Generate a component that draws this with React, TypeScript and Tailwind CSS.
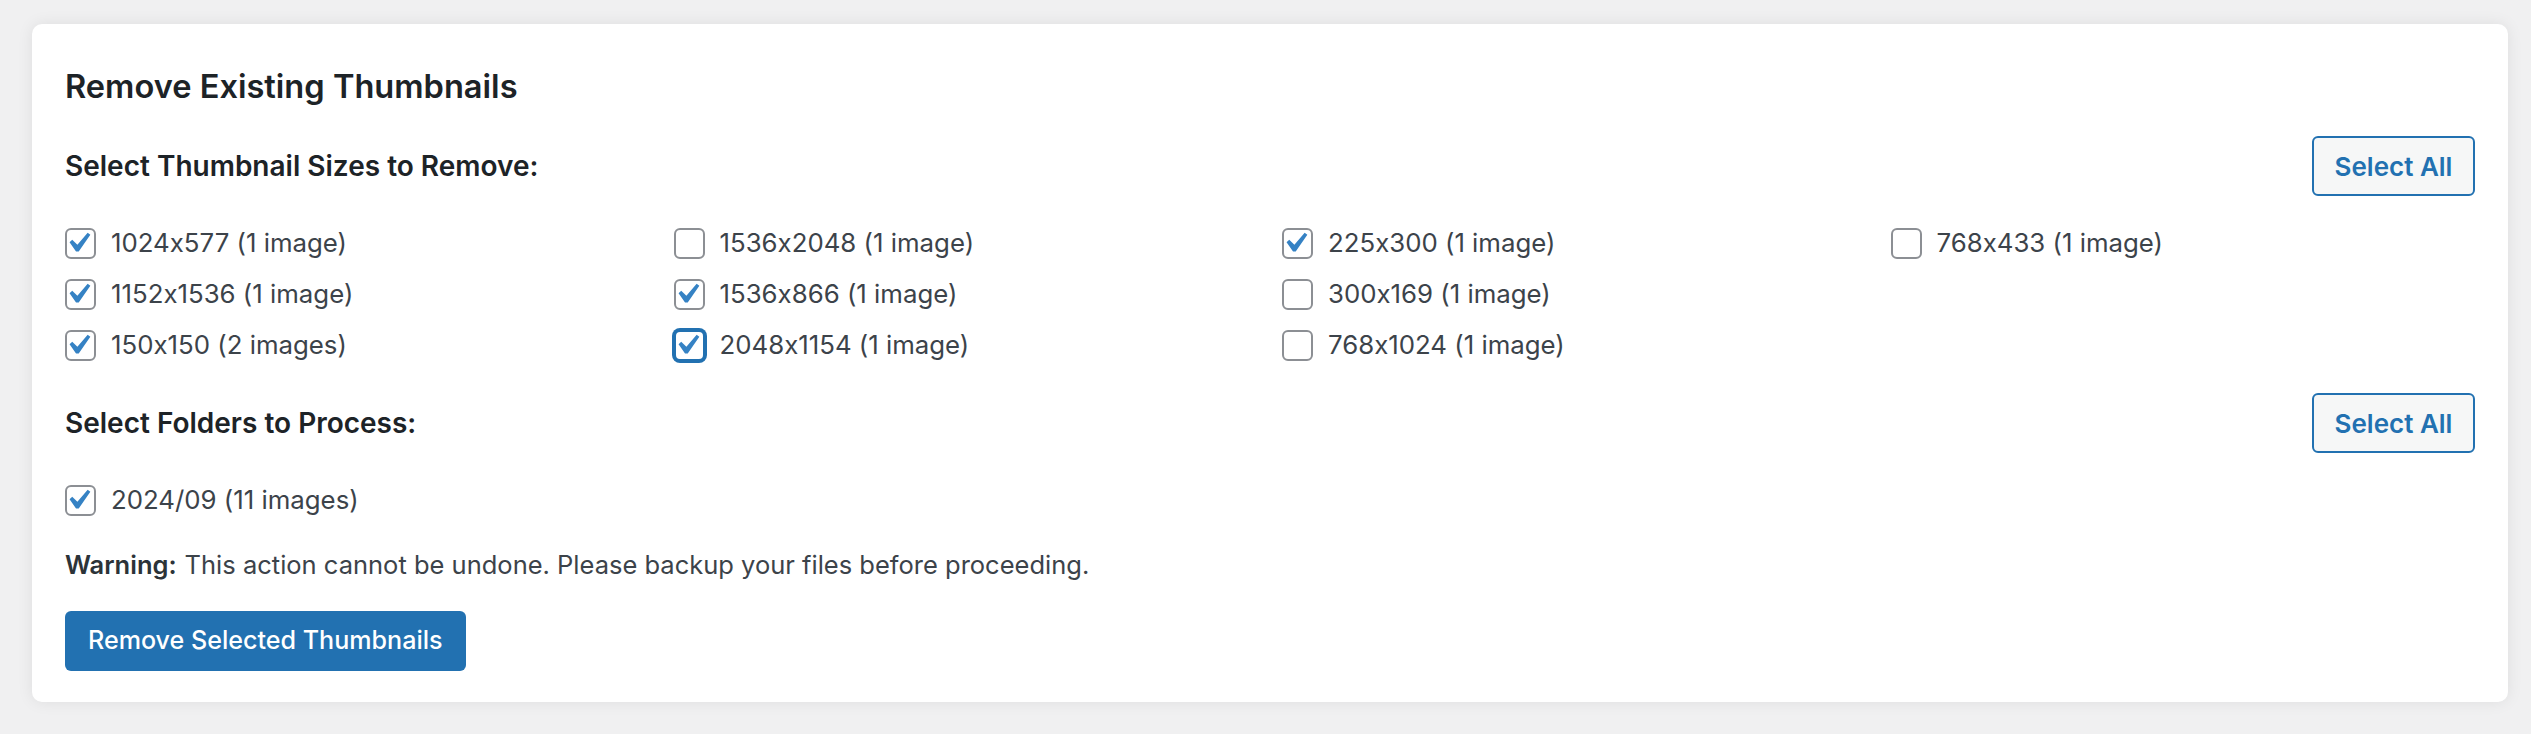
import { useState } from 'react';

const SIZES = [
  { label: '1024x577 (1 image)', checked: true },
  { label: '1152x1536 (1 image)', checked: true },
  { label: '150x150 (2 images)', checked: true },
  { label: '1536x2048 (1 image)', checked: false },
  { label: '1536x866 (1 image)', checked: true },
  { label: '2048x1154 (1 image)', checked: true, focused: true },
  { label: '225x300 (1 image)', checked: true },
  { label: '300x169 (1 image)', checked: false },
  { label: '768x1024 (1 image)', checked: false },
  { label: '768x433 (1 image)', checked: false },
];

function Checkbox({ checked, focused }: { checked: boolean; focused?: boolean }) {
  return (
    <span
      className={`relative w-[31px] h-[31px] shrink-0 rounded-[6px] border-2 bg-white ${
        focused ? 'border-[#2271b1] shadow-[0_0_0_2px_#2271b1]' : 'border-[#8c8f94]'
      }`}
    >
      {checked && (
        <svg
          viewBox="0 0 20 20"
          className="absolute left-[-9px] top-[-7px] w-[40px] h-[40px]"
          fill="#3582c4"
        >
          <path d="M14.83 4.89l1.34.94-5.81 8.38H9.02L5.78 9.67l1.34-1.25 2.57 2.4z" />
        </svg>
      )}
    </span>
  );
}

function Option({ label, checked, focused }: { label: string; checked: boolean; focused?: boolean }) {
  const [on, setOn] = useState(checked);
  return (
    <label className="h-[51px] flex items-center gap-[15px] cursor-pointer" onClick={() => setOn(!on)}>
      <Checkbox checked={on} focused={focused} />
      <span className="text-[25.8px] text-[#3c434a]">{label}</span>
    </label>
  );
}

function SectionHeader({ title }: { title: string }) {
  return (
    <div className="flex items-center justify-between h-[60px]">
      <h3 className="text-[28px] font-semibold text-[#1d2327]">{title}</h3>
      <button className="h-[60px] w-[163px] rounded-[6px] border-2 border-[#2271b1] bg-[#f6f7f7] text-[26px] font-semibold text-[#2271b1]">
        Select All
      </button>
    </div>
  );
}

export default function App() {
  return (
    <div
      className="min-h-screen bg-[#f0f0f1] pt-[24px] px-[32px] pr-[23px] [font-feature-settings:'calt'_0]"
      style={{ fontFamily: 'Inter, "Noto Sans", sans-serif' }}
    >
      <div className="bg-white rounded-[10px] shadow-[0_0_16px_rgba(0,0,0,0.08)] px-[33px] pt-[40px] pb-[31px]">
        <h2 className="h-[44px] flex items-center text-[32.6px] font-semibold text-[#1d2327]">
          Remove Existing Thumbnails
        </h2>

        <div className="mt-[28px]">
          <SectionHeader title="Select Thumbnail Sizes to Remove:" />
        </div>

        <div className="mt-[22px] grid grid-cols-4 grid-rows-3 grid-flow-col gap-x-6">
          {SIZES.map((s) => (
            <Option key={s.label} label={s.label} checked={s.checked} focused={s.focused} />
          ))}
        </div>

        <div className="mt-[22px]">
          <SectionHeader title="Select Folders to Process:" />
        </div>

        <div className="mt-[22px]">
          <Option label="2024/09 (11 images)" checked />
        </div>

        <p className="mt-[21px] h-[36px] flex items-center text-[25.5px] text-[#3c434a]">
          <strong className="font-semibold text-[#2c3338] mr-[8px]">Warning:</strong>
          This action cannot be undone. Please backup your files before proceeding.
        </p>

        <button className="mt-[28px] h-[60px] px-[23px] rounded-[6px] bg-[#2271b1] text-[25.1px] font-medium text-white">
          Remove Selected Thumbnails
        </button>
      </div>
    </div>
  );
}
